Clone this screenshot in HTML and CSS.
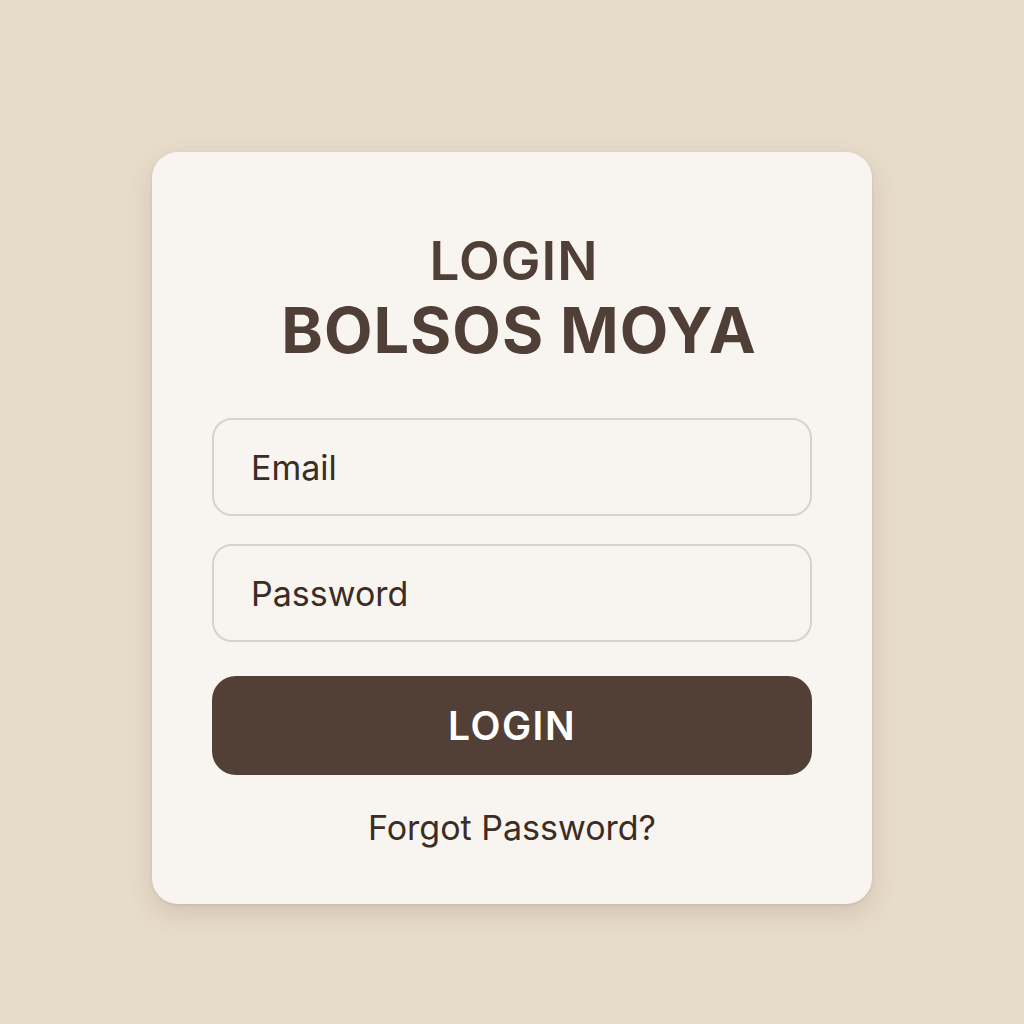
FILE: index.html
```html
<!DOCTYPE html>
<html lang="es">
<head>
<meta charset="utf-8">
<title>Login - Bolsos Moya</title>
<link rel="stylesheet" href="styles.css">
</head>
<body>
<main class="page">
  <section class="card">
    <h1 class="title">
      <span class="title-small">LOGIN</span>
      <span class="title-big">BOLSOS MOYA</span>
    </h1>
    <form class="form">
      <input class="field" type="email" placeholder="Email">
      <input class="field" type="password" placeholder="Password">
      <button class="btn" type="button">LOGIN</button>
    </form>
    <a class="forgot" href="#">Forgot Password?</a>
  </section>
</main>
</body>
</html>
```

FILE: styles.css
```css
html, body {
  margin: 0;
  padding: 0;
}
body {
  background: #e7dbca;
  font-family: Inter, "Noto Sans", sans-serif;
  color: #3b2c24;
  width: 1024px;
  height: 1024px;
  overflow: hidden;
}
.page {
  display: flex;
  justify-content: center;
  padding-top: 152px;
}
.card {
  box-sizing: border-box;
  width: 720px;
  height: 752px;
  background: #f8f5f0;
  border-radius: 26px;
  box-shadow: 0 10px 24px rgba(120, 95, 70, 0.18), 0 1px 3px rgba(120, 95, 70, 0.15);
  padding: 77px 60px 0;
  display: flex;
  flex-direction: column;
  align-items: center;
}
.title {
  margin: 0;
  display: flex;
  flex-direction: column;
  align-items: center;
  color: #4f3f36;
}
.title-small {
  font-size: 53px;
  font-weight: 600;
  line-height: 64px;
  letter-spacing: 1px;
  padding-left: 4px;
}
.title-big {
  font-size: 63px;
  font-weight: 700;
  line-height: 74px;
  letter-spacing: 1px;
  padding-left: 14px;
}
.form {
  width: 100%;
  display: flex;
  flex-direction: column;
  gap: 28px;
  margin-top: 51px;
}
.field {
  box-sizing: border-box;
  width: 100%;
  height: 98px;
  border: 2px solid #d9d2c8;
  border-radius: 20px;
  background: #f8f5f0;
  padding: 0 0 0 37px;
  font-family: Inter, "Noto Sans", sans-serif;
  font-size: 34px;
  color: #3b2c24;
  outline: none;
}
.field::placeholder {
  color: #3b2c24;
  opacity: 1;
}
.btn {
  height: 99px;
  margin-top: 6px;
  border: none;
  border-radius: 24px;
  background: #524037;
  color: #ffffff;
  font-family: Inter, "Noto Sans", sans-serif;
  font-size: 39px;
  font-weight: 600;
  letter-spacing: 1.5px;
  cursor: pointer;
}
.forgot {
  margin-top: 32px;
  font-size: 34px;
  color: #3b2c24;
  text-decoration: none;
}
```
